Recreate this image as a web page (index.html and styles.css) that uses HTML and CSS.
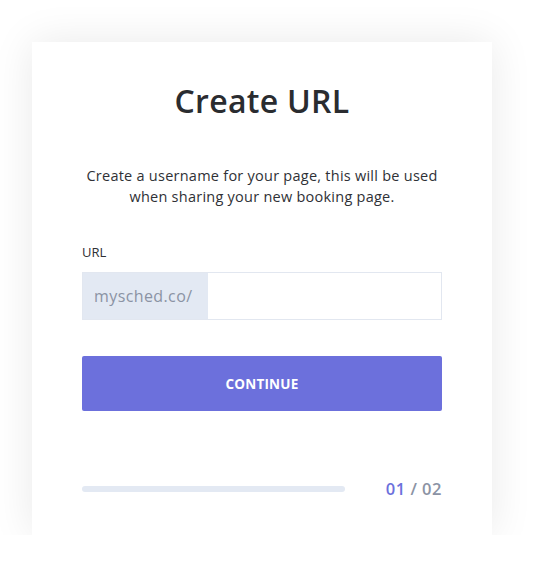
FILE: index.html
```html
<!DOCTYPE html>
<html>
<head>
<meta charset="utf-8">
<link rel="stylesheet" href="styles.css">
</head>
<body>
<div class="card">
  <h1 class="title">Create URL</h1>
  <p class="desc">Create a username for your page, this will be used<br>when sharing your new booking page.</p>
  <label class="label">URL</label>
  <div class="field">
    <span class="prefix">mysched.co/</span>
    <input class="input" type="text">
  </div>
  <button class="btn">CONTINUE</button>
  <div class="progress">
    <div class="track"></div>
    <div class="steps"><span class="cur">01</span> / 02</div>
  </div>
</div>
</body>
</html>
```
FILE: styles.css
```css
html, body { margin: 0; padding: 0; background: #fff; }
body {
  font-family: "Open Sans", "Liberation Sans", sans-serif;
  padding: 42px 0 0 32px;
}
.card {
  width: 460px;
  height: 493px;
  box-sizing: border-box;
  background: #fff;
  box-shadow: 0 0 40px rgba(0,0,0,0.09);
  padding: 39px 50px 0 50px;
  display: flex;
  flex-direction: column;
}
.title {
  margin: 0;
  text-align: center;
  font-size: 32px;
  line-height: 40px;
  font-weight: 600;
  color: #2a2c30;
  letter-spacing: 0.3px;
}
.desc {
  margin: 44px 0 0 0;
  text-align: center;
  font-size: 14.5px;
  line-height: 21px;
  color: #2f3136;
  letter-spacing: 0.25px;
}
.label {
  margin-top: 35px;
  font-size: 13px;
  line-height: 20px;
  color: #2f3136;
}
.field {
  margin-top: 10px;
  display: flex;
  height: 48px;
  box-sizing: border-box;
  border: 1px solid #e2e7f0;
}
.prefix {
  width: 125px;
  background: #e3e9f3;
  color: #8b93a4;
  font-size: 16px;
  letter-spacing: 0.4px;
  display: flex;
  align-items: center;
  padding-left: 11px;
  box-sizing: border-box;
}
.input {
  flex: 1;
  border: none;
  outline: none;
  background: #fff;
}
.btn {
  margin-top: 36px;
  height: 55px;
  border: none;
  border-radius: 2px;
  background: #6c70dc;
  color: #fff;
  font-family: inherit;
  font-weight: 700;
  font-size: 13.5px;
  letter-spacing: 0.2px;
}
.progress {
  margin-top: 66px;
  display: flex;
  align-items: center;
  justify-content: space-between;
}
.track {
  width: 263px;
  height: 6px;
  border-radius: 3px;
  background: #e3e9f3;
}
.steps {
  font-size: 16.5px;
  font-weight: 600;
  color: #8b93a4;
  letter-spacing: 0.5px;
}
.cur { color: #6c70dc; }
```
